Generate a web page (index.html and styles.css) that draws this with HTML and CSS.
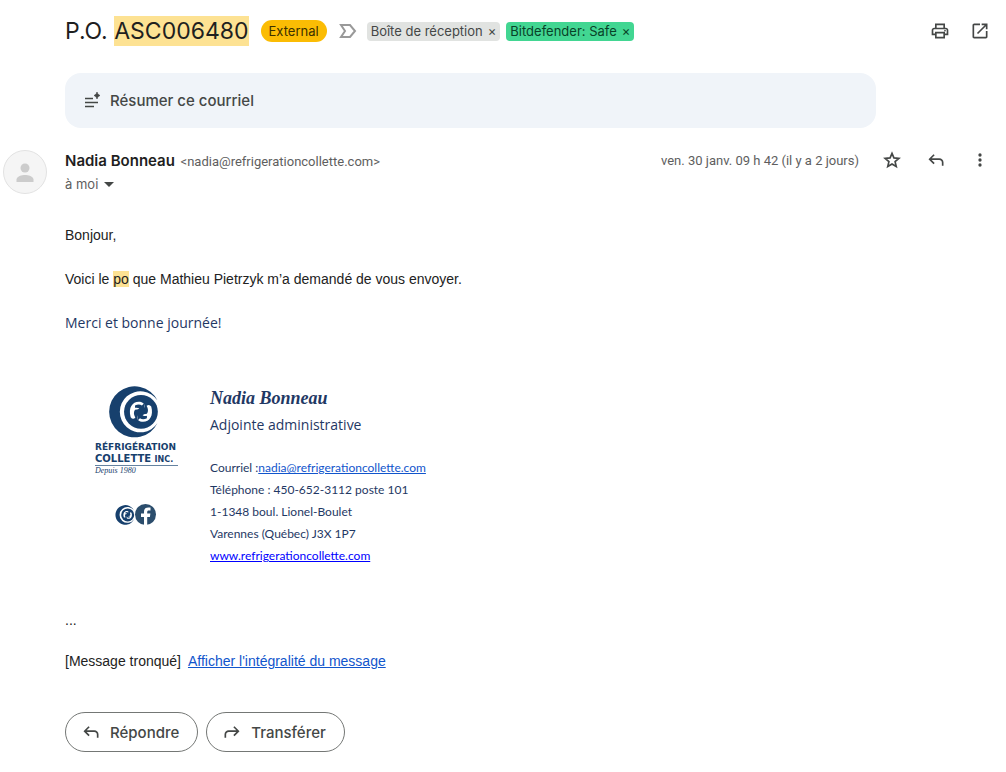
FILE: index.html
```html
<!DOCTYPE html>
<html lang="fr">
<head>
<meta charset="utf-8">
<title>P.O. ASC006480</title>
<link rel="stylesheet" href="styles.css">
</head>
<body>
<svg class="defs" aria-hidden="true">
  <symbol id="reply" viewBox="0 0 24 24"><path fill="currentColor" d="M19 19v-4q0-1.250-.875-2.125T16 12H6.825l3.600 3.600L9 17l-6-6 6-6 1.425 1.400L6.825 10H16q2.075 0 3.538 1.463T21 15v4z"/></symbol>
  <symbol id="swirl" viewBox="86 30 150 157">
    <path fill="#17406d" d="M232 74A77 77 0 1 0 232 142A62 62 0 1 1 232 74Z"/>
    <circle cx="182" cy="108" r="51" fill="#17406d"/>
    <path fill="#fff" d="M151 124C142 92 160 73 184 79Q197 84 191 98L164 102Q157 112 165 126Q157 132 151 124Z"/>
    <path fill="#fff" d="M213 92C222 124 204 143 180 137Q167 132 173 118L200 114Q207 104 199 90Q207 84 213 92Z"/>
    <path fill="#17406d" d="M164 89Q176 82 185 89L192 82V104H170L177 98Q171 94 164 96Z"/>
    <path fill="#17406d" d="M200 127Q188 134 179 127L172 134V112H194L187 118Q193 122 200 120Z"/>
  </symbol>
</svg>
<main class="mail">
  <header class="subject-row">
    <h1 class="subject">P.O. <mark>ASC006480</mark></h1>
    <span class="external">External</span>
    <svg class="importance" viewBox="0 0 18 16"><path d="M2 2h9l5 6-5 6H2l4-6z" fill="none" stroke="#999" stroke-width="2"/></svg>
    <span class="label">Boîte de réception <button aria-label="Retirer Boîte de réception">×</button></span>
    <span class="label safe">Bitdefender: Safe <button aria-label="Retirer Bitdefender">×</button></span>
    <div class="tools">
      <button class="icon" aria-label="Imprimer"><svg viewBox="0 0 24 24"><path fill="currentColor" d="M16 8V5H8v3H6V3h12v5zM18 12.500q.425 0 .713-.288T19 11.500t-.288-.712T18 10.500t-.712.288-.288.712.288.712.712.288M16 19v-4H8v4zm2 2H6v-4H2v-6q0-1.275.875-2.137T5 8h14q1.275 0 2.138.863T22 11v6h-4zm2-6v-4q0-.425-.287-.712T19 10H5q-.425 0-.712.288T4 11v4h2v-2h12v2z"/></svg></button>
      <button class="icon" aria-label="Nouvelle fenêtre"><svg viewBox="0 0 24 24"><path fill="currentColor" d="M5 21q-.825 0-1.412-.587T3 19V5q0-.825.588-1.412T5 3h7v2H5v14h14v-7h2v7q0 .825-.587 1.413T19 21zm4.700-5.300-1.400-1.400L17.600 5H14V3h7v7h-2V6.400z"/></svg></button>
    </div>
  </header>

  <button class="summary"><svg viewBox="0 0 18 18"><path d="M1 6.500h8M1 10.500h13M1 14.500h9" stroke="currentColor" stroke-width="1.600"/><path fill="currentColor" d="M13 0Q13.500 3 16 3.500Q13.500 4 13 7Q12.500 4 10 3.500Q12.500 3 13 0Z" stroke="currentColor" stroke-width="0.600"/></svg>Résumer ce courriel</button>

  <section class="sender-row">
    <svg class="avatar" viewBox="0 0 44 44"><circle cx="22" cy="22" r="21.500" fill="#f5f5f5" stroke="#e2e2e2"/><circle cx="22" cy="18" r="4.500" fill="#ccc"/><path fill="#ccc" d="M13.500 32v-2.500c0-3.200 5.500-4.500 8.500-4.500s8.500 1.300 8.500 4.500V32z"/></svg>
    <div class="sender">
      <div class="from"><strong>Nadia Bonneau</strong> <span>&lt;nadia@refrigerationcollette.com&gt;</span></div>
      <button class="recipient">à moi <i class="caret"></i></button>
    </div>
    <time class="date">ven. 30 janv. 09 h 42 (il y a 2 jours)</time>
    <div class="actions">
      <button class="icon" aria-label="Suivre"><svg viewBox="0 0 24 24"><path fill="none" stroke="currentColor" stroke-width="2" d="M12 4l2.300 5.500 6 .5-4.600 4 1.400 5.800-5.100-3.100-5.100 3.100 1.400-5.800-4.600-4 6-.5z"/></svg></button>
      <button class="icon" aria-label="Répondre au message"><svg><use href="#reply"/></svg></button>
      <button class="icon" aria-label="Plus"><svg viewBox="0 0 24 24" fill="currentColor"><circle cx="12" cy="6" r="2"/><circle cx="12" cy="12" r="2"/><circle cx="12" cy="18" r="2"/></svg></button>
    </div>
  </section>

  <article class="message">
    <p>Bonjour,</p>
    <p>Voici le <mark>po</mark> que Mathieu Pietrzyk m’a demandé de vous envoyer.</p>
    <p class="thanks">Merci et bonne journée!</p>
    <div class="signature">
      <div class="brand">
        <svg class="logo"><use href="#swirl"/></svg>
        <div class="company">RÉFRIGÉRATION</div>
        <div class="company second">COLLETTE <small>INC.</small></div>
        <div class="since">Depuis 1980</div>
        <div class="social">
          <svg class="mini"><use href="#swirl"/></svg>
          <svg class="facebook" viewBox="0 0 21 21"><circle cx="10.500" cy="10.500" r="10.500" fill="#2b4d6c"/><path fill="#fff" d="M9 21v-8H6V9.500h3V8c0-3 1.500-4.500 4.200-4.500h2.300v3h-1.700c-1.200 0-1.600.6-1.600 1.700v1.300h3.200l-.5 3.500h-2.700v8z"/></svg>
        </div>
      </div>
      <address class="contact">
        <div class="name">Nadia Bonneau</div>
        <div class="role">Adjointe administrative</div>
        <div>Courriel :<a class="email" href="mailto:nadia@refrigerationcollette.com">nadia@refrigerationcollette.com</a></div>
        <div>Téléphone : 450-652-3112 poste 101</div>
        <div>1-1348 boul. Lionel-Boulet</div>
        <div>Varennes (Québec) J3X 1P7</div>
        <div><a class="site" href="#">www.refrigerationcollette.com</a></div>
      </address>
    </div>
    <p class="ellipsis">...</p>
    <p class="clipped">[Message tronqué]&nbsp; <a href="#">Afficher l'intégralité du message</a></p>
  </article>

  <footer class="replies">
    <button><svg><use href="#reply"/></svg>Répondre</button>
    <button><svg class="flip"><use href="#reply"/></svg>Transférer</button>
  </footer>
</main>
</body>
</html>
```

FILE: styles.css
```css
* { box-sizing: border-box; }
body { margin: 0; background: #fff; color: #1f1f1f; font-family: Inter, "Liberation Sans", sans-serif; font-size: 13px; }
button { border: 0; padding: 0; background: none; font: inherit; color: inherit; cursor: pointer; }
p { margin: 0; }
svg { display: block; flex: none; }
.defs { position: absolute; width: 0; height: 0; }
mark { background: #fde293; color: inherit; }
.mail { padding: 12px 16px 20px 65px; }

.subject-row { display: flex; align-items: center; height: 38px; white-space: nowrap; }
.subject { margin: 0 12px 0 0; font-family: Inter, sans-serif; font-size: 23px; font-weight: 400; line-height: 30px; }
.subject mark { display: inline-block; }
.external { padding: 0 8px; border-radius: 11px; background: #fbbc04; line-height: 22px; color: #3c3000; }
.importance { width: 18px; height: 16px; margin: 0 10px 0 12px; }
.label { display: flex; gap: 5px; margin-right: 6px; padding: 0 4px; border-radius: 4px; background: #e1e3e1; color: #444746; line-height: 19px; }
.safe { background: #42d692; color: #094228; }
.tools { display: flex; gap: 20px; margin-left: auto; }
.icon { color: #444746; }
.icon svg { width: 20px; height: 20px; }

.summary { display: flex; align-items: center; gap: 8px; width: calc(100% - 114px); height: 55px; margin-top: 23px; padding: 0 19px; border-radius: 16px; background: #f0f4f9; color: #444746; font-size: 15px; font-weight: 500; }
.summary svg { width: 18px; height: 18px; }

.sender-row { display: flex; align-items: flex-start; margin: 22px 0 0 -62px; }
.avatar { width: 44px; height: 44px; margin-right: 18px; }
.sender { flex: 1; white-space: nowrap; }
.from, .recipient { line-height: 22px; color: #5e5e5e; }
.from span, .date { font-family: Roboto, sans-serif; font-size: 13px; }
.from strong { margin-right: 2px; font-size: 15px; font-weight: 600; color: #1f1f1f; }
.recipient { display: flex; align-items: center; gap: 6px; }
.caret { border: 5px solid transparent; border-top-color: #444746; border-bottom: 0; }
.date { line-height: 22px; color: #5e5e5e; white-space: nowrap; }
.actions { display: flex; gap: 24px; margin-left: 23px; }

.message { margin-top: 29px; font-family: "Liberation Sans", Arial, sans-serif; font-size: 14px; line-height: 22px; color: #222; }
.message p + p { margin-top: 22px; }
.message .thanks { font-family: "Open Sans", sans-serif; color: #1f3864; }
.signature { display: flex; margin-top: 52px; color: #1f3864; }
.brand { width: 145px; padding-left: 30px; }
.logo { width: 50px; height: 52px; margin-left: 14px; }
.company { width: 83px; margin-top: 4px; font-family: "DejaVu Sans", sans-serif; font-size: 9px; font-weight: 700; line-height: 11px; white-space: nowrap; color: #17406d; }
.second { margin-top: 0; border-bottom: 1px solid #6482a0; font-size: 10px; }
.second small { font-size: 8px; }
.since { font-family: "Liberation Serif", serif; font-size: 8px; font-style: italic; line-height: 10px; color: #17406d; }
.social { display: flex; align-items: center; margin: 28px 0 0 20px; }
.mini { width: 20px; height: 20px; }
.facebook { width: 21px; height: 21px; }
.contact { font-family: Lato, sans-serif; font-size: 12px; font-style: normal; line-height: 22px; white-space: nowrap; }
.name { font-family: "Liberation Serif", serif; font-size: 18px; font-weight: 700; font-style: italic; line-height: 24px; }
.role { margin: 4px 0 21px; font-family: "Open Sans", sans-serif; font-size: 14px; }
.contact .email, .clipped a { color: #1155cc; }
.contact .site { color: #00f; }
.message .ellipsis { margin-top: 42px; }
.message .clipped { margin-top: 19px; }

.replies { display: flex; gap: 8px; margin-top: 40px; }
.replies button { display: flex; align-items: center; gap: 9px; height: 40px; padding: 0 18px 0 15px; border: 1px solid #747775; border-radius: 20px; color: #444746; font-size: 15px; font-weight: 500; }
.replies svg { width: 20px; height: 20px; }
.flip { transform: scaleX(-1); }
```
